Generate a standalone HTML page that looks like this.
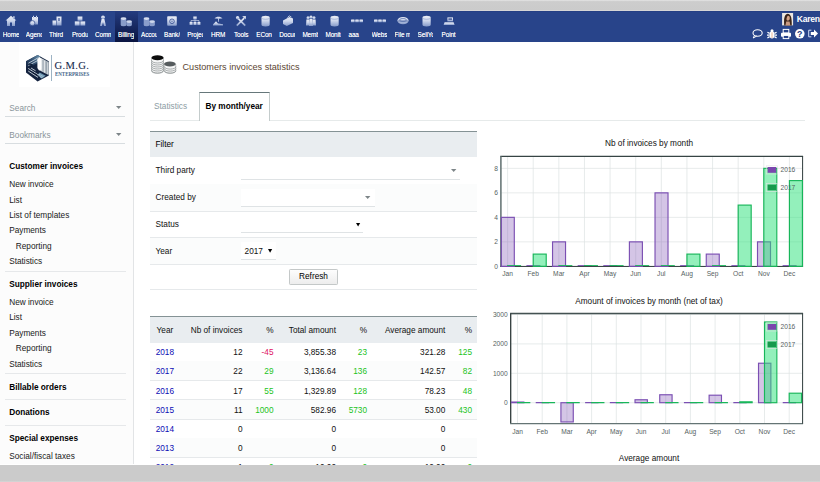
<!DOCTYPE html>
<html lang="en">
<head>
<meta charset="utf-8">
<title>Customers invoices statistics</title>
<style>
html,body{margin:0;padding:0;}
body{width:820px;height:482px;overflow:hidden;position:relative;background:#fff;
 font-family:"Liberation Sans",Arial,sans-serif;font-size:8.25px;color:#111;}
*{box-sizing:border-box;}
div,span,a{position:absolute;white-space:nowrap;}
svg{position:absolute;overflow:visible;}
#topband{left:0;top:0;width:820px;height:11px;background:linear-gradient(#e6e6e6 0,#cdcdcd 1.6px,#cbcbcb 9.6px,#dcdcdc 11px);}
#botband{left:0;top:464.6px;width:820px;height:17.4px;background:linear-gradient(#cbcbcb 0,#cbcbcb 15.4px,#dadada 17.4px);z-index:50;}
#nav{left:0;top:11px;width:820px;height:30.7px;z-index:5;background:linear-gradient(#203a7e 0,#28448a 0.9px);}
.ni{top:0;width:23px;height:30.7px;}
.ni.sel{background:linear-gradient(#243c80,#0a1440);}
.ni svg{left:5px;top:3.6px;width:12px;height:12px;opacity:.92;}
.ni span{left:2.8px;top:19.2px;width:15.8px;height:9px;overflow:hidden;text-shadow:0 0 0.5px rgba(255,255,255,.75);letter-spacing:-0.12px;
 font-size:6.4px;line-height:9px;color:#fff;text-align:center;}
.ni span.l{text-align:left;}
#side{left:0;top:41px;width:134px;height:423px;background:#fcfcfc;border-right:1px solid #e2e4e6;}
.sel1{left:5px;width:120px;height:18px;border-bottom:1px solid #d8dde0;}
.sel1 span{left:4.3px;top:5.4px;line-height:10px;color:#8a959a;}
.arr{width:0;height:0;border-left:2.8px solid transparent;border-right:2.8px solid transparent;border-top:3.2px solid #7d8588;margin-left:-0.6px;margin-top:-0.2px;}
.arr.k{border-top-color:#000;}
.m{left:9.2px;line-height:10px;color:#1a1a1a;margin-top:1.2px;}
.m.b{font-weight:bold;color:#000;}
.m.i{left:15.8px;}
.sep{left:5px;width:120.5px;height:1px;background:#e6e8ea;}
.t{line-height:10px;margin-top:1.2px;}
.r{text-align:right;}
.hl{height:1px;background:#e6e9eb;}
.g{color:#22c322;}
.rd{color:#e0115f;}
.y{color:#0c0cb4;}
.ax{font-size:6.65px;line-height:8px;color:#566262;margin-top:0.6px;}
</style>
</head>
<body>
<div id="topband"></div>
<svg width="0" height="0" style="left:0;top:0"><defs><linearGradient id="ig" x1="0" y1="0" x2="0" y2="1"><stop offset="0" stop-color="#fbfcff"/><stop offset="0.45" stop-color="#dfe6f6"/><stop offset="1" stop-color="#8fa3cf"/></linearGradient></defs></svg>
<div id="nav">
<div class="ni" style="left:0.00px"><svg viewBox="0 0 12 12"><path d="M6 0.8 L0.6 5.6 H2 V11 H5 V7.6 H7 V11 H10 V5.6 H11.4 Z" fill="url(#ig)"/><rect x="8.2" y="1.3" width="1.4" height="2.6" fill="url(#ig)"/></svg><span>Home</span></div>
<div class="ni" style="left:23.05px"><svg viewBox="0 0 12 12"><path d="M4 2 H10 V9.5 H4 Z" fill="url(#ig)"/><circle cx="4.3" cy="8.2" r="2.6" fill="url(#ig)" stroke="#28438a" stroke-width="0.7"/><rect x="5" y="0.8" width="1" height="2" fill="url(#ig)"/><rect x="8" y="0.8" width="1" height="2" fill="url(#ig)"/></svg><span class="l">Agenda</span></div>
<div class="ni" style="left:46.09px"><svg viewBox="0 0 12 12"><path d="M5.5 1.5 H10.5 V10.5 H5.5 Z" fill="url(#ig)"/><path d="M1.5 5.5 H5 V10.5 H1.5 Z" fill="url(#ig)"/><rect x="7" y="3" width="2" height="3" fill="#28438a" opacity=".55"/></svg><span class="l" style="width:15.2px">Third parties</span></div>
<div class="ni" style="left:69.14px"><svg viewBox="0 0 12 12"><rect x="3.6" y="1.5" width="4.8" height="4.2" fill="url(#ig)"/><rect x="0.8" y="6.4" width="4.8" height="4.2" fill="url(#ig)"/><rect x="6.4" y="6.4" width="4.8" height="4.2" fill="url(#ig)"/></svg><span class="l">Products</span></div>
<div class="ni" style="left:92.18px"><svg viewBox="0 0 12 12"><circle cx="6" cy="2.3" r="1.9" fill="url(#ig)"/><path d="M4.6 4 H7.4 L9 11 H7 L6 7.2 L5 11 H3 Z" fill="url(#ig)"/></svg><span class="l">Commercial</span></div>
<div class="ni sel" style="left:115.23px"><svg viewBox="0 0 12 12"><path d="M0.7 3.6 V10 A2.8 1.3 0 0 0 6.3 10 V3.6 Z" fill="#93a6d2"/><ellipse cx="3.5" cy="3.6" rx="2.8" ry="1.4" fill="#e4eaf8"/><path d="M6.3 6.6 V10 A2.8 1.3 0 0 0 11.9 10 V6.6 Z" fill="#93a6d2"/><ellipse cx="9.1" cy="6.6" rx="2.8" ry="1.3" fill="#dce4f5"/></svg><span class="l">Billing</span></div>
<div class="ni" style="left:138.27px"><svg viewBox="0 0 12 12"><path d="M0.7 3.6 V10 A2.8 1.3 0 0 0 6.3 10 V3.6 Z" fill="#93a6d2"/><ellipse cx="3.5" cy="3.6" rx="2.8" ry="1.4" fill="#e4eaf8"/><path d="M6.3 6.6 V10 A2.8 1.3 0 0 0 11.9 10 V6.6 Z" fill="#93a6d2"/><ellipse cx="9.1" cy="6.6" rx="2.8" ry="1.3" fill="#dce4f5"/></svg><span class="l">Accounting</span></div>
<div class="ni" style="left:161.31px"><svg viewBox="0 0 12 12"><rect x="1.2" y="1.2" width="9.6" height="9.6" rx="0.8" fill="url(#ig)"/><circle cx="6" cy="6.3" r="2.3" fill="none" stroke="#28438a" stroke-width="1" opacity=".75"/><circle cx="6" cy="6.3" r="0.8" fill="#28438a" opacity=".6"/></svg><span class="l">Bank/Cash</span></div>
<div class="ni" style="left:184.36px"><svg viewBox="0 0 12 12"><rect x="4.3" y="1.5" width="3.4" height="3" fill="url(#ig)"/><rect x="0.6" y="7" width="3" height="3" fill="url(#ig)"/><rect x="4.5" y="7" width="3" height="3" fill="url(#ig)"/><rect x="8.4" y="7" width="3" height="3" fill="url(#ig)"/><path d="M2 7 V5.6 H10 V7 M6 4.5 V7" stroke="#cfd9ee" stroke-width="0.8" fill="none"/></svg><span class="l">Projects</span></div>
<div class="ni" style="left:207.41px"><svg viewBox="0 0 12 12"><path d="M2.5 3.6 C4 1.2 8.5 1 10.5 3.4 L6.6 4 Z" fill="url(#ig)"/><path d="M1 9.6 L4 6.2 L6 8.4 L11 9.2 L11 10.4 L1 10.4 Z" fill="url(#ig)"/><rect x="6.2" y="3.6" width="0.8" height="3.4" fill="url(#ig)"/></svg><span>HRM</span></div>
<div class="ni" style="left:230.45px"><svg viewBox="0 0 12 12"><path d="M1.2 10 L8.6 2.6 L9.8 3.8 L2.4 11.2 Z" fill="url(#ig)"/><path d="M10.8 10 L3.4 2.6 L2.2 3.8 L9.6 11.2 Z" fill="url(#ig)"/><path d="M7.2 1.2 L10.8 1 L11 4.6 L9.6 3.4 Z" fill="url(#ig)"/><circle cx="2.6" cy="2.8" r="1.7" fill="url(#ig)"/></svg><span>Tools</span></div>
<div class="ni" style="left:253.50px"><svg viewBox="0 0 12 12"><path d="M2.5 2.4 A4.1 1.6 0 0 1 10.7 2.4 V9.8 A4.1 1.6 0 0 1 2.5 9.8 Z" fill="url(#ig)"/><path d="M2.5 2.8 A4.1 1.5 0 0 0 10.7 2.8" fill="none" stroke="#8fa3d0" stroke-width="0.6"/></svg><span class="l">EConcept</span></div>
<div class="ni" style="left:276.54px"><svg viewBox="0 0 12 12"><path d="M1 5.4 L7.4 2 L11 3.6 L11 8 L4.8 11 L1 9 Z" fill="url(#ig)"/><path d="M5.4 2.6 L7.2 0.8 L9.4 2" stroke="#d6def0" stroke-width="0.9" fill="none"/></svg><span class="l">Documents</span></div>
<div class="ni" style="left:299.59px"><svg viewBox="0 0 12 12"><circle cx="3" cy="2.8" r="1.5" fill="url(#ig)"/><circle cx="6" cy="2.2" r="1.6" fill="url(#ig)"/><circle cx="9" cy="2.8" r="1.5" fill="url(#ig)"/><path d="M1.4 4.6 H4.4 L5 10.6 H1 Z" fill="url(#ig)"/><path d="M4.6 4 H7.4 L8 11 H4 Z" fill="url(#ig)"/><path d="M7.6 4.6 H10.6 L11 10.6 H7.2 Z" fill="url(#ig)"/></svg><span class="l">Members</span></div>
<div class="ni" style="left:322.63px"><svg viewBox="0 0 12 12"><path d="M2.5 2.4 A4.1 1.6 0 0 1 10.7 2.4 V9.8 A4.1 1.6 0 0 1 2.5 9.8 Z" fill="url(#ig)"/><path d="M2.5 2.8 A4.1 1.5 0 0 0 10.7 2.8" fill="none" stroke="#8fa3d0" stroke-width="0.6"/></svg><span class="l">Monitoring</span></div>
<div class="ni" style="left:345.68px"><svg viewBox="0 0 12 12"><rect x="0" y="4.6" width="3.6" height="2.6" rx="0.5" fill="url(#ig)"/><rect x="4.2" y="4.6" width="3.6" height="2.6" rx="0.5" fill="url(#ig)"/><rect x="8.4" y="4.6" width="3.6" height="2.6" rx="0.5" fill="url(#ig)"/></svg><span class="l">aaa</span></div>
<div class="ni" style="left:368.72px"><svg viewBox="0 0 12 12"><rect x="0" y="4.6" width="3.6" height="2.6" rx="0.5" fill="url(#ig)"/><rect x="4.2" y="4.6" width="3.6" height="2.6" rx="0.5" fill="url(#ig)"/><rect x="8.4" y="4.6" width="3.6" height="2.6" rx="0.5" fill="url(#ig)"/></svg><span class="l">Website</span></div>
<div class="ni" style="left:391.77px"><svg viewBox="0 0 12 12"><ellipse cx="6" cy="5.6" rx="5.6" ry="3.6" fill="url(#ig)"/><ellipse cx="6" cy="5" rx="3.4" ry="1.6" fill="none" stroke="#5a72ad" stroke-width="0.7"/><path d="M0.6 5.4 H11.4 M0.8 6.6 H11.2" stroke="#5a72ad" stroke-width="0.5"/></svg><span class="l">File manager</span></div>
<div class="ni" style="left:414.81px"><svg viewBox="0 0 12 12"><path d="M2.5 2.4 A4.1 1.6 0 0 1 10.7 2.4 V9.8 A4.1 1.6 0 0 1 2.5 9.8 Z" fill="url(#ig)"/><path d="M2.5 2.8 A4.1 1.5 0 0 0 10.7 2.8" fill="none" stroke="#8fa3d0" stroke-width="0.6"/></svg><span class="l">SellYourSaas</span></div>
<div class="ni" style="left:437.86px"><svg viewBox="0 0 12 12"><rect x="4.4" y="2.4" width="5.6" height="4" fill="url(#ig)"/><rect x="5.4" y="3.2" width="3.6" height="1.8" fill="#28438a" opacity=".7"/><path d="M1.6 7.2 H10.6 L11.6 10 H0.6 Z" fill="url(#ig)"/></svg><span>Point</span></div>
<svg style="left:782px;top:2.2px" width="11.2" height="12.4" viewBox="0 0 11.2 12.6"><rect width="11.2" height="12.6" fill="#ece7e2"/><path d="M2.2 12.6 C1.6 7 2 1.2 5.6 0.8 C9.2 0.8 10 6 9.8 12.6 Z" fill="#3a2419"/><ellipse cx="5.9" cy="5.2" rx="2" ry="2.7" fill="#d6a488"/><path d="M4.2 8.6 H7.6 L8.4 12.6 H3.4 Z" fill="#c99a80"/><path d="M3.6 5.4 C3.6 2.6 5 1.8 6.6 2 C5.4 2.8 4.6 4 4.2 7.6 Z" fill="#3a2419"/></svg>
<span style="left:796.8px;top:3.3px;font-size:8.6px;letter-spacing:-0.28px;line-height:10px;font-weight:bold;color:#fff">Karen</span>
<svg style="left:752.2px;top:17.6px" width="11" height="10" viewBox="0 0 11 10"><ellipse cx="5.6" cy="4" rx="4.6" ry="3.2" fill="none" stroke="#ffffff" stroke-width="1.1"/><path d="M2.6 6.2 L1.2 9 L4.8 7" fill="none" stroke="#ffffff" stroke-width="1"/></svg>
<svg style="left:767.2px;top:17.6px" width="10" height="10" viewBox="0 0 10 10"><ellipse cx="5" cy="5.8" rx="2.6" ry="3.6" fill="#ffffff"/><circle cx="5" cy="1.7" r="1.5" fill="#ffffff"/><path d="M0.4 3.2 L2.6 4.4 M0 6 H2.4 M0.4 9 L2.6 7.6 M9.6 3.2 L7.4 4.4 M10 6 H7.6 M9.6 9 L7.4 7.6" stroke="#ffffff" stroke-width="1.25"/><path d="M5 3.4 V9" stroke="#e9a27c" stroke-width="0.8"/></svg>
<svg style="left:781px;top:17.7px" width="10" height="10" viewBox="0 0 10 10"><rect x="2.2" y="0.4" width="5.6" height="3.6" fill="none" stroke="#ffffff" stroke-width="1"/><rect x="0" y="3.8" width="10" height="4" rx="0.8" fill="#ffffff"/><rect x="2.2" y="6.4" width="5.6" height="3.2" fill="#28438a" stroke="#ffffff" stroke-width="1"/></svg>
<svg style="left:794.9px;top:18px" width="9.6" height="9.6" viewBox="0 0 10 10"><circle cx="5" cy="5" r="5" fill="#ffffff"/><text x="5" y="8.3" text-anchor="middle" font-family="Liberation Sans, sans-serif" font-weight="bold" font-size="9.2" fill="#1e3a80">?</text></svg>
<svg style="left:808.2px;top:18.4px" width="10" height="9" viewBox="0 0 10 9"><path d="M3.4 1.2 H0.7 V7.8 H3.4" fill="none" stroke="#cfdcf5" stroke-width="1"/><path d="M2.8 3 H6 V0.6 L10 4.5 L6 8.4 V6 H2.8 Z" fill="#ffffff"/></svg>
</div>
<div id="side">
<div style="left:19px;top:0.6px;width:91px;height:45.6px;background:#fff"></div>
<svg style="left:26.3px;top:13.9px" width="23" height="26.5" viewBox="0 0 23 26.5">
<defs><linearGradient id="lg1" x1="1" y1="0" x2="0" y2="1"><stop offset="0" stop-color="#6b94af"/><stop offset="0.55" stop-color="#2d4a6b"/><stop offset="1" stop-color="#132340"/></linearGradient>
<linearGradient id="lg2" x1="0" y1="0" x2="1" y2="0"><stop offset="0" stop-color="#eef1f3"/><stop offset="1" stop-color="#9aa6af"/></linearGradient></defs>
<polygon points="11.6,0 22.8,6.2 22.8,20.4 11.6,26.4 0,17.6 0,6.3" fill="#14233f"/>
<polygon points="11.6,0 14.2,1.4 14.2,6.4 5,11.6 0,12.2 0,6.3" fill="url(#lg1)"/>
<path d="M2.4 8.2 L12.6 2.6 M2.4 10.6 L12.6 5" stroke="#dfe7ee" stroke-width="0.75" fill="none"/>
<path d="M3.2 9.4 H6 V11.2 H3.2" stroke="#0c1830" stroke-width="1" fill="none"/>
<polygon points="13,2 22.8,7 22.8,20 19.6,18.4 13,15" fill="url(#lg2)"/>
<polygon points="13,2.6 15.4,3.8 15.4,14.4 13,15.4 11.4,13 11.4,4.2" fill="#ffffff"/>
<path d="M17 5 V16.6 M20.2 6.6 V18.4" stroke="#8b98a3" stroke-width="0.8" fill="none"/>
<path d="M18.6 5.8 V17.6 M21.8 7.4 V19.4" stroke="#f2f4f6" stroke-width="0.7" fill="none"/>
<polygon points="13.6,17.6 19.8,20.8 15.6,23.4 11,20.4" fill="#6f98b2"/>
<path d="M13 19.2 L17.6 21.8 M12.4 20.6 L16.4 22.8" stroke="#c9d9e4" stroke-width="0.6" fill="none"/>
<path d="M2.2 13.4 L13.4 20.6 M2.2 16 L12 22.4 M5 13 L9.6 15.8" stroke="#e6edf2" stroke-width="0.8" fill="none"/>
<path d="M6.4 17.2 L12.8 21.2 Q14 22.4 12.6 23.2" stroke="#0c1830" stroke-width="0.9" fill="none"/>
</svg>
<div style="left:51.4px;top:14px;width:0.9px;height:26px;background:#9db3c4"></div>
<span style="left:54.4px;top:19px;font-family:'Liberation Serif',serif;font-size:10.6px;line-height:12px;letter-spacing:0.38px;color:#182b4e;-webkit-text-stroke:0.1px #182b4e" id="gmg">G.M.G.</span>
<span style="left:54.6px;top:29.6px;font-family:'Liberation Serif',serif;font-size:5.7px;line-height:6px;letter-spacing:0;font-weight:bold;color:#47678a;transform-origin:0 0;transform:scaleX(0.87)" id="ent">ENTERPRISES</span>
<div class="sel1" style="top:57.5px"><span>Search</span><svg style="left:110.50px;top:7.85px" width="5.40" height="3.10" viewBox="0 0 5.40 3.10"><polygon points="0,0 5.40,0 2.70,3.10" fill="#7d8588"/></svg></div>
<div class="sel1" style="top:84.5px"><span>Bookmarks</span><svg style="left:110.50px;top:7.85px" width="5.40" height="3.10" viewBox="0 0 5.40 3.10"><polygon points="0,0 5.40,0 2.70,3.10" fill="#7d8588"/></svg></div>
<span class="m b" style="top:120.25px">Customer invoices</span>
<span class="m " style="top:138.25px">New invoice</span>
<span class="m " style="top:154.00px">List</span>
<span class="m " style="top:169.00px">List of templates</span>
<span class="m " style="top:184.30px">Payments</span>
<span class="m i" style="top:199.60px">Reporting</span>
<span class="m " style="top:215.00px">Statistics</span>
<div class="sep" style="top:230.00px"></div>
<span class="m b" style="top:238.00px">Supplier invoices</span>
<span class="m " style="top:256.00px">New invoice</span>
<span class="m " style="top:271.00px">List</span>
<span class="m " style="top:286.70px">Payments</span>
<span class="m i" style="top:302.00px">Reporting</span>
<span class="m " style="top:317.50px">Statistics</span>
<div class="sep" style="top:332.30px"></div>
<span class="m b" style="top:340.80px">Billable orders</span>
<div class="sep" style="top:358.00px"></div>
<span class="m b" style="top:366.00px">Donations</span>
<div class="sep" style="top:383.80px"></div>
<span class="m b" style="top:392.00px">Special expenses</span>
<span class="m " style="top:410.00px">Social/fiscal taxes</span>
</div>
<svg style="left:150.5px;top:54.5px" width="25" height="19" viewBox="0 0 25 19">
<g stroke="#8a9092" stroke-width="0.5" fill="#f6f7f7">
<path d="M0.5 2.8 V15.8 A6 2.6 0 0 0 12.5 15.8 V2.8"/>
<path d="M13.1 9 V15.9 A5.8 2.5 0 0 0 24.7 15.9 V9"/>
</g>
<g fill="none" stroke="#7b8284" stroke-width="0.65">
<path d="M0.5 5.4 A6 2.6 0 0 0 12.5 5.4 M0.5 7.4 A6 2.6 0 0 0 12.5 7.4 M0.5 9.4 A6 2.6 0 0 0 12.5 9.4 M0.5 11.4 A6 2.6 0 0 0 12.5 11.4 M0.5 13.4 A6 2.6 0 0 0 12.5 13.4 M0.5 15.4 A6 2.6 0 0 0 12.5 15.4"/>
<path d="M13.4 11.6 A5.8 2.5 0 0 0 25 11.6 M13.4 13.6 A5.8 2.5 0 0 0 25 13.6 M13.4 15.6 A5.8 2.5 0 0 0 25 15.6"/>
</g>
<ellipse cx="6.5" cy="2.8" rx="6" ry="2.5" fill="#0c0c0c"/>
<ellipse cx="18.9" cy="9" rx="5.8" ry="2.6" fill="#565c5e"/>
</svg>
<span style="left:182.5px;top:61px;font-size:9.15px;line-height:12px;color:#5c4632">Customers invoices statistics</span>
<span class="t" style="left:154px;top:101px;color:#8c9ca4">Statistics</span>
<div class="hl" style="left:150px;top:120px;width:655px;background:#e6eaea"></div>
<div style="left:199px;top:92px;width:71px;height:29px;border:1px solid #c4cccc;border-top-color:#66777a;border-bottom:none;background:#fff"></div>
<span class="t" style="left:205.5px;top:101px;font-weight:bold;color:#000">By month/year</span>
<div style="left:150px;top:130.5px;width:327px;height:1.6px;background:linear-gradient(#76858a,#939f9f)"></div>
<div style="left:150px;top:131.5px;width:327px;height:25px;background:#e9edf0"></div>
<span class="t" style="left:155.5px;top:139px;color:#000">Filter</span>
<div class="hl" style="left:150px;top:183.5px;width:327px"></div>
<span class="t" style="left:155.5px;top:164.75px">Third party</span>
<div style="left:150px;top:184.0px;width:327px;height:27.0px;background:#fbfcfc"></div>
<div class="hl" style="left:150px;top:210.5px;width:327px"></div>
<span class="t" style="left:155.5px;top:192.00px">Created by</span>
<div class="hl" style="left:150px;top:237.2px;width:327px"></div>
<span class="t" style="left:155.5px;top:218.85px">Status</span>
<div style="left:150px;top:237.7px;width:327px;height:26.8px;background:#fbfcfc"></div>
<div class="hl" style="left:150px;top:264.0px;width:327px"></div>
<span class="t" style="left:155.5px;top:245.60px">Year</span>
<div style="left:241px;top:163px;width:219px;height:16.5px;background:#fff;border-bottom:1px solid #dfe3e5"></div><svg style="left:450.50px;top:169.05px" width="5.40" height="3.10" viewBox="0 0 5.40 3.10"><polygon points="0,0 5.40,0 2.70,3.10" fill="#7d8588"/></svg>
<div style="left:241px;top:189px;width:133.5px;height:17.5px;background:#fff;border-bottom:1px solid #dfe3e5"></div><svg style="left:364.80px;top:196.05px" width="5.40" height="3.10" viewBox="0 0 5.40 3.10"><polygon points="0,0 5.40,0 2.70,3.10" fill="#7d8588"/></svg>
<div style="left:241px;top:216px;width:122px;height:16.7px;background:#fff;border-bottom:1px solid #dfe3e5"></div><svg style="left:355.90px;top:222.90px" width="4.20" height="3.40" viewBox="0 0 4.20 3.40"><polygon points="0,0 4.20,0 2.10,3.40" fill="#000"/></svg>
<div style="left:241px;top:242px;width:35px;height:17.5px;background:#fff;border-bottom:1px solid #dfe3e5"></div><span class="t" style="left:244.6px;top:246px">2017</span><svg style="left:268.30px;top:249.10px" width="4.20" height="3.80" viewBox="0 0 4.20 3.80"><polygon points="0,0 4.20,0 2.10,3.80" fill="#000"/></svg>
<div class="hl" style="left:150px;top:288.7px;width:327px"></div>
<div style="left:289px;top:269px;width:49px;height:15.6px;border:1px solid #c4c8c8;border-radius:1.2px;background:linear-gradient(#fdfdfd,#ededed);text-align:center;line-height:14px;color:#000">Refresh</div>
<div style="left:150px;top:315.8px;width:327px;height:1.6px;background:linear-gradient(#76858a,#939f9f)"></div>
<div style="left:150px;top:316.5px;width:327px;height:26px;background:#e9edf0"></div>
<span class="t" style="left:156.6px;top:324.50px">Year</span>
<span class="t r " style="right:577.5px;top:324.50px">Nb of invoices</span>
<span class="t r " style="right:546.5px;top:324.50px">%</span>
<span class="t r " style="right:484.0px;top:324.50px">Total amount</span>
<span class="t r " style="right:453.0px;top:324.50px">%</span>
<span class="t r " style="right:374.7px;top:324.50px">Average amount</span>
<span class="t r " style="right:348.0px;top:324.50px">%</span>
<div class="hl" style="left:150px;top:360.8px;width:327px"></div>
<a class="t y" style="left:155.7px;top:347.02px">2018</a>
<span class="t r " style="right:577.5px;top:347.02px">12</span>
<span class="t r rd" style="right:546.5px;top:347.02px">-45</span>
<span class="t r " style="right:484.0px;top:347.02px">3,855.38</span>
<span class="t r g" style="right:453.0px;top:347.02px">23</span>
<span class="t r " style="right:374.7px;top:347.02px">321.28</span>
<span class="t r g" style="right:348.0px;top:347.02px">125</span>
<div style="left:150px;top:361.2px;width:327px;height:19.25px;background:#fbfcfc"></div>
<div class="hl" style="left:150px;top:380.0px;width:327px"></div>
<a class="t y" style="left:155.7px;top:366.27px">2017</a>
<span class="t r " style="right:577.5px;top:366.27px">22</span>
<span class="t r g" style="right:546.5px;top:366.27px">29</span>
<span class="t r " style="right:484.0px;top:366.27px">3,136.64</span>
<span class="t r g" style="right:453.0px;top:366.27px">136</span>
<span class="t r " style="right:374.7px;top:366.27px">142.57</span>
<span class="t r g" style="right:348.0px;top:366.27px">82</span>
<div class="hl" style="left:150px;top:399.2px;width:327px"></div>
<a class="t y" style="left:155.7px;top:385.52px">2016</a>
<span class="t r " style="right:577.5px;top:385.52px">17</span>
<span class="t r g" style="right:546.5px;top:385.52px">55</span>
<span class="t r " style="right:484.0px;top:385.52px">1,329.89</span>
<span class="t r g" style="right:453.0px;top:385.52px">128</span>
<span class="t r " style="right:374.7px;top:385.52px">78.23</span>
<span class="t r g" style="right:348.0px;top:385.52px">48</span>
<div style="left:150px;top:399.8px;width:327px;height:19.25px;background:#fbfcfc"></div>
<div class="hl" style="left:150px;top:418.5px;width:327px"></div>
<a class="t y" style="left:155.7px;top:404.77px">2015</a>
<span class="t r " style="right:577.5px;top:404.77px">11</span>
<span class="t r g" style="right:546.5px;top:404.77px">1000</span>
<span class="t r " style="right:484.0px;top:404.77px">582.96</span>
<span class="t r g" style="right:453.0px;top:404.77px">5730</span>
<span class="t r " style="right:374.7px;top:404.77px">53.00</span>
<span class="t r g" style="right:348.0px;top:404.77px">430</span>
<div class="hl" style="left:150px;top:437.8px;width:327px"></div>
<a class="t y" style="left:155.7px;top:424.02px">2014</a>
<span class="t r " style="right:577.5px;top:424.02px">0</span>
<span class="t r " style="right:484.0px;top:424.02px">0</span>
<span class="t r " style="right:374.7px;top:424.02px">0</span>
<div style="left:150px;top:438.2px;width:327px;height:19.25px;background:#fbfcfc"></div>
<div class="hl" style="left:150px;top:457.0px;width:327px"></div>
<a class="t y" style="left:155.7px;top:443.27px">2013</a>
<span class="t r " style="right:577.5px;top:443.27px">0</span>
<span class="t r " style="right:484.0px;top:443.27px">0</span>
<span class="t r " style="right:374.7px;top:443.27px">0</span>
<div class="hl" style="left:150px;top:476.2px;width:327px"></div>
<a class="t y" style="left:155.7px;top:461.92px">2012</a>
<span class="t r " style="right:577.5px;top:461.92px">1</span>
<span class="t r g" style="right:546.5px;top:461.92px">0</span>
<span class="t r " style="right:484.0px;top:461.92px">10.00</span>
<span class="t r g" style="right:453.0px;top:461.92px">0</span>
<span class="t r " style="right:374.7px;top:461.92px">10.00</span>
<span class="t r g" style="right:348.0px;top:461.92px">0</span>
<span class="t" style="left:495px;width:308px;text-align:center;top:138.00px;color:#111">Nb of invoices by month</span>
<svg style="left:0;top:0" width="820" height="464" viewBox="0 0 820 464"><defs><clipPath id="c156"><rect x="500.30" y="155.70" width="302.90" height="111.55"/></clipPath></defs><path d="M507.60 156.30 V266.45 M533.22 156.30 V266.45 M558.84 156.30 V266.45 M584.46 156.30 V266.45 M610.08 156.30 V266.45 M635.70 156.30 V266.45 M661.32 156.30 V266.45 M686.94 156.30 V266.45 M712.56 156.30 V266.45 M738.18 156.30 V266.45 M763.80 156.30 V266.45 M789.42 156.30 V266.45 M500.90 266.35 H802.60 M500.90 241.85 H802.60 M500.90 217.35 H802.60 M500.90 192.85 H802.60 M500.90 168.35 H802.60" stroke="#dce3e2" stroke-width="0.7" fill="none"/><path d="M500.30 156.30 L803.10 156.30" stroke="#364444" stroke-width="1.3" fill="none"/><path d="M500.90 156.30 L500.90 266.45" stroke="#5f6f6f" stroke-width="1.5" fill="none"/><path d="M500.30 266.45 L803.10 266.45" stroke="#2f3c3c" stroke-width="1.0" fill="none"/><path d="M802.60 156.30 L802.60 266.45" stroke="#2f3c3c" stroke-width="1.0" fill="none"/><g clip-path="url(#c156)"><rect x="501.30" y="217.35" width="13.00" height="49.00" fill="rgba(123,79,179,0.33)" stroke="#7b4fb3" stroke-width="1.15"/><path d="M526.42 265.50 H540.42" stroke="#7b4fb3" stroke-width="0.9"/><rect x="552.54" y="241.85" width="13.00" height="24.50" fill="rgba(123,79,179,0.33)" stroke="#7b4fb3" stroke-width="1.15"/><path d="M577.66 265.50 H591.66" stroke="#7b4fb3" stroke-width="0.9"/><path d="M603.28 265.50 H617.28" stroke="#7b4fb3" stroke-width="0.9"/><rect x="629.40" y="241.85" width="13.00" height="24.50" fill="rgba(123,79,179,0.33)" stroke="#7b4fb3" stroke-width="1.15"/><rect x="655.02" y="192.85" width="13.00" height="73.50" fill="rgba(123,79,179,0.33)" stroke="#7b4fb3" stroke-width="1.15"/><path d="M680.14 265.50 H694.14" stroke="#7b4fb3" stroke-width="0.9"/><rect x="706.26" y="254.10" width="13.00" height="12.25" fill="rgba(123,79,179,0.33)" stroke="#7b4fb3" stroke-width="1.15"/><path d="M731.38 265.50 H745.38" stroke="#7b4fb3" stroke-width="0.9"/><rect x="757.50" y="241.85" width="13.00" height="24.50" fill="rgba(123,79,179,0.33)" stroke="#7b4fb3" stroke-width="1.15"/><path d="M782.62 265.50 H796.62" stroke="#7b4fb3" stroke-width="0.9"/><path d="M507.10 265.50 H521.10" stroke="#18b65a" stroke-width="0.9"/><rect x="533.22" y="254.10" width="13.00" height="12.25" fill="rgba(40,225,120,0.5)" stroke="#18b65a" stroke-width="1.15"/><path d="M558.34 265.50 H572.34" stroke="#18b65a" stroke-width="0.9"/><path d="M583.96 265.50 H597.96" stroke="#18b65a" stroke-width="0.9"/><path d="M609.58 265.50 H623.58" stroke="#18b65a" stroke-width="0.9"/><path d="M635.20 265.50 H649.20" stroke="#18b65a" stroke-width="0.9"/><path d="M660.82 265.50 H674.82" stroke="#18b65a" stroke-width="0.9"/><rect x="686.94" y="254.10" width="13.00" height="12.25" fill="rgba(40,225,120,0.5)" stroke="#18b65a" stroke-width="1.15"/><path d="M712.06 265.50 H726.06" stroke="#18b65a" stroke-width="0.9"/><rect x="738.18" y="205.10" width="13.00" height="61.25" fill="rgba(40,225,120,0.5)" stroke="#18b65a" stroke-width="1.15"/><rect x="763.80" y="168.35" width="13.00" height="98.00" fill="rgba(40,225,120,0.5)" stroke="#18b65a" stroke-width="1.15"/><rect x="789.42" y="180.60" width="13.00" height="85.75" fill="rgba(40,225,120,0.5)" stroke="#18b65a" stroke-width="1.15"/></g><rect x="766.3" y="165.80" width="11.2" height="8.2" fill="none" stroke="#e3e3e3" stroke-opacity="0.8" stroke-width="0.7"/><rect x="766.3" y="183.40" width="11.2" height="8.2" fill="none" stroke="#e3e3e3" stroke-opacity="0.8" stroke-width="0.7"/><rect x="767.6" y="167.00" width="8.6" height="5.8" fill="#7a46ad"/><rect x="767.6" y="184.60" width="8.6" height="5.8" fill="#16994c"/></svg>
<span class="ax" style="left:780.5px;top:165.90px">2016</span>
<span class="ax" style="left:780.5px;top:183.50px">2017</span>
<span class="ax" style="left:492.60px;width:30px;text-align:center;top:269.15px">Jan</span>
<span class="ax" style="left:518.22px;width:30px;text-align:center;top:269.15px">Feb</span>
<span class="ax" style="left:543.84px;width:30px;text-align:center;top:269.15px">Mar</span>
<span class="ax" style="left:569.46px;width:30px;text-align:center;top:269.15px">Apr</span>
<span class="ax" style="left:595.08px;width:30px;text-align:center;top:269.15px">May</span>
<span class="ax" style="left:620.70px;width:30px;text-align:center;top:269.15px">Jun</span>
<span class="ax" style="left:646.32px;width:30px;text-align:center;top:269.15px">Jul</span>
<span class="ax" style="left:671.94px;width:30px;text-align:center;top:269.15px">Aug</span>
<span class="ax" style="left:697.56px;width:30px;text-align:center;top:269.15px">Sep</span>
<span class="ax" style="left:723.18px;width:30px;text-align:center;top:269.15px">Oct</span>
<span class="ax" style="left:748.80px;width:30px;text-align:center;top:269.15px">Nov</span>
<span class="ax" style="left:774.42px;width:30px;text-align:center;top:269.15px">Dec</span>
<span class="ax r" style="right:322.10px;top:261.95px">0</span>
<span class="ax r" style="right:322.10px;top:237.45px">2</span>
<span class="ax r" style="right:322.10px;top:212.95px">4</span>
<span class="ax r" style="right:322.10px;top:188.45px">6</span>
<span class="ax r" style="right:322.10px;top:163.95px">8</span>
<span class="t" style="left:495px;width:308px;text-align:center;top:296.00px;color:#111">Amount of invoices by month (net of tax)</span>
<svg style="left:0;top:0" width="820" height="464" viewBox="0 0 820 464"><defs><clipPath id="c313"><rect x="510.10" y="313.00" width="293.10" height="111.40"/></clipPath></defs><path d="M517.50 313.60 V423.60 M542.20 313.60 V423.60 M566.90 313.60 V423.60 M591.60 313.60 V423.60 M616.30 313.60 V423.60 M641.00 313.60 V423.60 M665.70 313.60 V423.60 M690.40 313.60 V423.60 M715.10 313.60 V423.60 M739.80 313.60 V423.60 M764.50 313.60 V423.60 M789.20 313.60 V423.60 M510.70 402.70 H802.60 M510.70 373.30 H802.60 M510.70 343.90 H802.60 M510.70 314.50 H802.60" stroke="#dce3e2" stroke-width="0.7" fill="none"/><path d="M510.10 313.60 L803.10 313.60" stroke="#445252" stroke-width="1.5" fill="none"/><path d="M510.70 313.60 L510.70 423.60" stroke="#2f3a3a" stroke-width="1.3" fill="none"/><path d="M510.10 423.60 L803.10 423.60" stroke="#647474" stroke-width="1.4" fill="none"/><path d="M802.60 313.60 L802.60 423.60" stroke="#2f3c3c" stroke-width="1.0" fill="none"/><g clip-path="url(#c313)"><rect x="511.52" y="402.05" width="12.35" height="0.65" fill="rgba(123,79,179,0.33)" stroke="#7b4fb3" stroke-width="1.15"/><path d="M535.73 402.70 H549.08" stroke="#7b4fb3" stroke-width="1.3"/><rect x="560.92" y="402.70" width="12.35" height="19.26" fill="rgba(123,79,179,0.33)" stroke="#7b4fb3" stroke-width="1.15"/><path d="M585.12 402.70 H598.48" stroke="#7b4fb3" stroke-width="1.3"/><path d="M609.82 402.70 H623.17" stroke="#7b4fb3" stroke-width="1.3"/><rect x="635.02" y="399.76" width="12.35" height="2.94" fill="rgba(123,79,179,0.33)" stroke="#7b4fb3" stroke-width="1.15"/><rect x="659.73" y="394.76" width="12.35" height="7.94" fill="rgba(123,79,179,0.33)" stroke="#7b4fb3" stroke-width="1.15"/><path d="M683.92 402.70 H697.27" stroke="#7b4fb3" stroke-width="1.3"/><rect x="709.12" y="395.20" width="12.35" height="7.50" fill="rgba(123,79,179,0.33)" stroke="#7b4fb3" stroke-width="1.15"/><path d="M733.32 402.70 H746.67" stroke="#7b4fb3" stroke-width="1.3"/><rect x="758.52" y="363.22" width="12.35" height="39.48" fill="rgba(123,79,179,0.33)" stroke="#7b4fb3" stroke-width="1.15"/><path d="M782.73 402.70 H796.08" stroke="#7b4fb3" stroke-width="1.3"/><path d="M517.00 402.70 H530.35" stroke="#18b65a" stroke-width="1.3"/><path d="M541.70 402.70 H555.05" stroke="#18b65a" stroke-width="1.3"/><path d="M566.40 402.70 H579.75" stroke="#18b65a" stroke-width="1.3"/><path d="M591.10 402.70 H604.45" stroke="#18b65a" stroke-width="1.3"/><path d="M615.80 402.70 H629.15" stroke="#18b65a" stroke-width="1.3"/><path d="M640.50 402.70 H653.85" stroke="#18b65a" stroke-width="1.3"/><path d="M665.20 402.70 H678.55" stroke="#18b65a" stroke-width="1.3"/><path d="M689.90 402.70 H703.25" stroke="#18b65a" stroke-width="1.3"/><path d="M714.60 402.70 H727.95" stroke="#18b65a" stroke-width="1.3"/><rect x="739.80" y="401.82" width="12.35" height="0.88" fill="rgba(40,225,120,0.5)" stroke="#18b65a" stroke-width="1.15"/><rect x="764.50" y="321.97" width="12.35" height="80.73" fill="rgba(40,225,120,0.5)" stroke="#18b65a" stroke-width="1.15"/><rect x="789.20" y="393.20" width="12.35" height="9.50" fill="rgba(40,225,120,0.5)" stroke="#18b65a" stroke-width="1.15"/></g><rect x="766.3" y="322.80" width="11.2" height="8.2" fill="none" stroke="#e3e3e3" stroke-opacity="0.8" stroke-width="0.7"/><rect x="766.3" y="340.40" width="11.2" height="8.2" fill="none" stroke="#e3e3e3" stroke-opacity="0.8" stroke-width="0.7"/><rect x="767.6" y="324.00" width="8.6" height="5.8" fill="#7a46ad"/><rect x="767.6" y="341.60" width="8.6" height="5.8" fill="#16994c"/></svg>
<span class="ax" style="left:780.5px;top:322.90px">2016</span>
<span class="ax" style="left:780.5px;top:340.50px">2017</span>
<span class="ax" style="left:502.50px;width:30px;text-align:center;top:427.20px">Jan</span>
<span class="ax" style="left:527.20px;width:30px;text-align:center;top:427.20px">Feb</span>
<span class="ax" style="left:551.90px;width:30px;text-align:center;top:427.20px">Mar</span>
<span class="ax" style="left:576.60px;width:30px;text-align:center;top:427.20px">Apr</span>
<span class="ax" style="left:601.30px;width:30px;text-align:center;top:427.20px">May</span>
<span class="ax" style="left:626.00px;width:30px;text-align:center;top:427.20px">Jun</span>
<span class="ax" style="left:650.70px;width:30px;text-align:center;top:427.20px">Jul</span>
<span class="ax" style="left:675.40px;width:30px;text-align:center;top:427.20px">Aug</span>
<span class="ax" style="left:700.10px;width:30px;text-align:center;top:427.20px">Sep</span>
<span class="ax" style="left:724.80px;width:30px;text-align:center;top:427.20px">Oct</span>
<span class="ax" style="left:749.50px;width:30px;text-align:center;top:427.20px">Nov</span>
<span class="ax" style="left:774.20px;width:30px;text-align:center;top:427.20px">Dec</span>
<span class="ax r" style="right:312.30px;top:398.70px">0</span>
<span class="ax r" style="right:312.30px;top:369.30px">1000</span>
<span class="ax r" style="right:312.30px;top:339.90px">2000</span>
<span class="ax r" style="right:312.30px;top:310.50px">3000</span>
<span class="t" style="left:495px;width:308px;text-align:center;top:453.25px;color:#111">Average amount</span>
<div id="botband"></div>
</body>
</html>
